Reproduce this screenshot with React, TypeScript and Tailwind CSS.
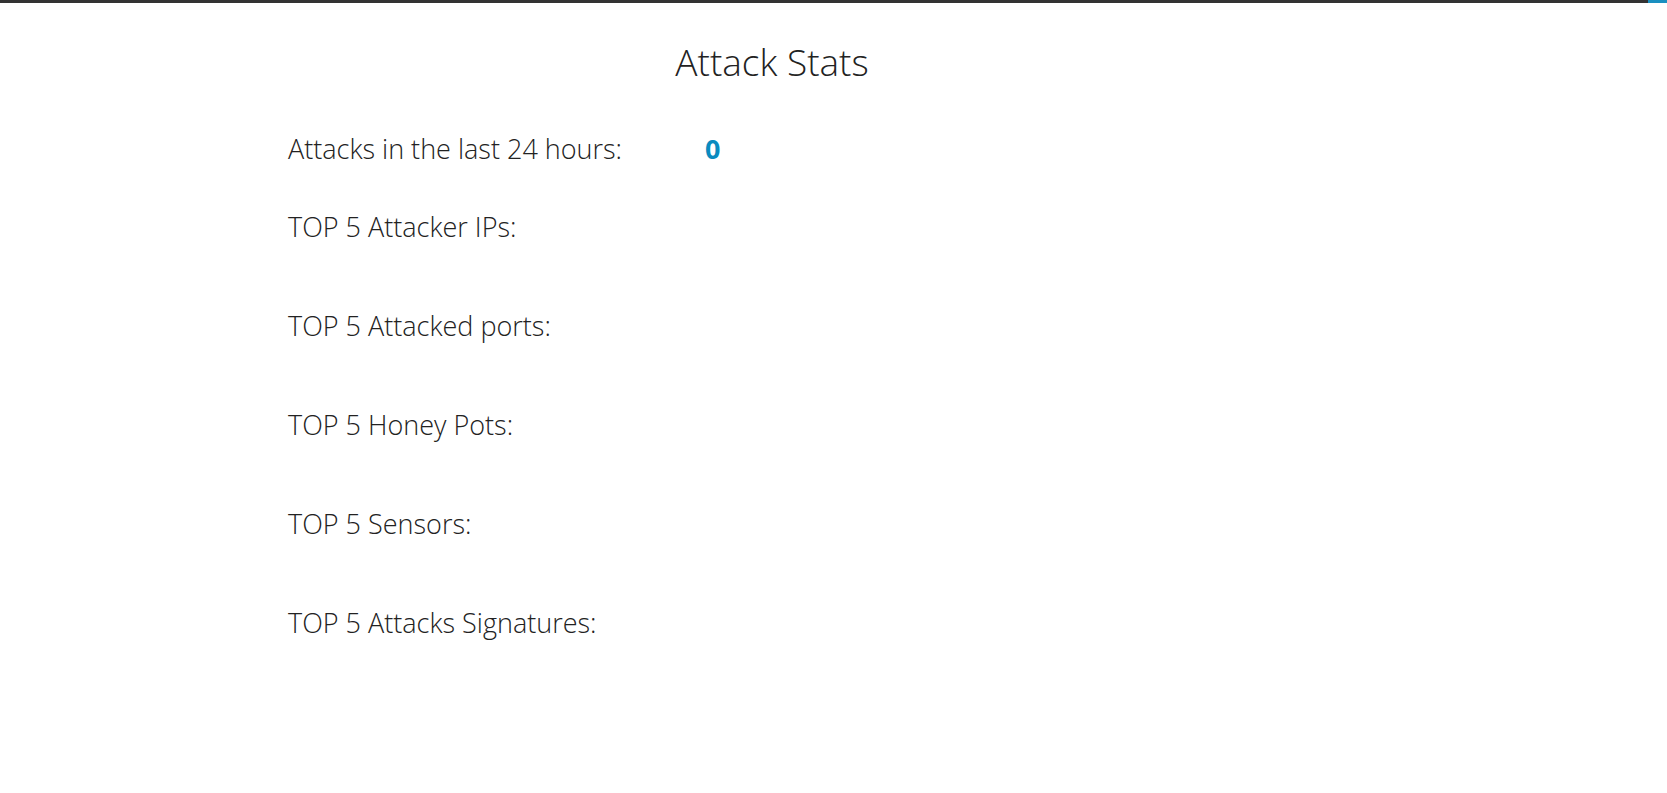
import React from 'react';

const sections = [
  'TOP 5 Attacker IPs:',
  'TOP 5 Attacked ports:',
  'TOP 5 Honey Pots:',
  'TOP 5 Sensors:',
  'TOP 5 Attacks Signatures:',
];

export default function App() {
  return (
    <div
      className="min-h-[793px] bg-white text-[#222]"
      style={{ fontFamily: '"Open Sans", "Liberation Sans", sans-serif' }}
    >
      {/* top bar */}
      <div className="flex h-[3px]">
        <div className="flex-1 bg-[#333333]" />
        <div className="w-[19px] bg-[#1a8fc0]" />
      </div>

      <div className="ml-[288px] w-[968px]">
        <h1 className="pt-[35px] text-center text-[37px] font-light leading-[48px]">
          Attack Stats
        </h1>

        <div className="mt-[44px] flex items-center text-[27px] font-light leading-[38px]">
          <span className="w-[417px]">Attacks in the last 24 hours:</span>
          <span className="font-bold text-[#0a8bbf]">0</span>
        </div>

        <div className="mt-[40px] flex flex-col gap-[61px] text-[27px] font-light leading-[38px]">
          {sections.map((s) => (
            <div key={s}>{s}</div>
          ))}
        </div>
      </div>
    </div>
  );
}
